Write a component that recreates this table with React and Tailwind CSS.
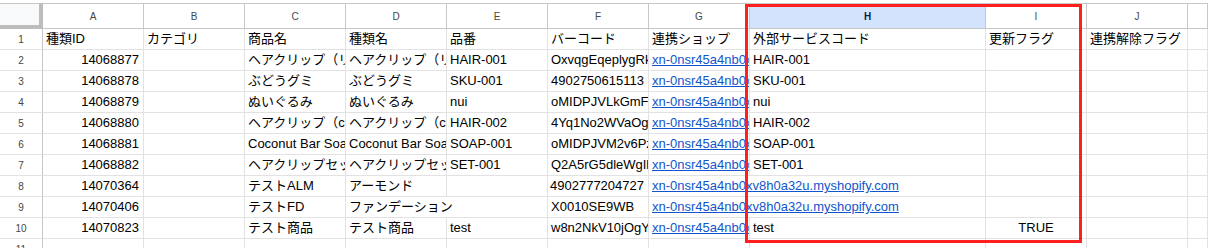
const LINK = 'xn-0nsr45a4nb0xv8h0a32u.myshopify.com';

const headers = ['A', 'B', 'C', 'D', 'E', 'F', 'G', 'H', 'I', 'J', ''];

const rows = [
  ['種類ID', 'カテゴリ', '商品名', '種類名', '品番', 'バーコード', '連携ショップ', '外部サービスコード', '更新フラグ', '連携解除フラグ', ''],
  [{ t: '14068877', right: true }, '', 'ヘアクリップ（リボン）', 'ヘアクリップ（リボン）', 'HAIR-001', 'OxvqgEqeplygRk2T', { t: LINK, link: true }, 'HAIR-001', '', '', ''],
  [{ t: '14068878', right: true }, '', 'ぶどうグミ', 'ぶどうグミ', 'SKU-001', { t: '4902750615113', right: true }, { t: LINK, link: true }, 'SKU-001', '', '', ''],
  [{ t: '14068879', right: true }, '', 'ぬいぐるみ', 'ぬいぐるみ', 'nui', 'oMIDPJVLkGmFq8x', { t: LINK, link: true }, 'nui', '', '', ''],
  [{ t: '14068880', right: true }, '', 'ヘアクリップ（cream）', 'ヘアクリップ（cream）', 'HAIR-002', '4Yq1No2WVaOgT5e', { t: LINK, link: true }, 'HAIR-002', '', '', ''],
  [{ t: '14068881', right: true }, '', 'Coconut Bar Soap', 'Coconut Bar Soap', 'SOAP-001', 'oMIDPJVM2v6Pz3c', { t: LINK, link: true }, 'SOAP-001', '', '', ''],
  [{ t: '14068882', right: true }, '', 'ヘアクリップセット', 'ヘアクリップセット', 'SET-001', 'Q2A5rG5dleWgIh7', { t: LINK, link: true }, 'SET-001', '', '', ''],
  [{ t: '14070364', right: true }, '', 'テストALM', 'アーモンド', '', { t: '4902777204727', right: true }, { t: LINK, link: true, span: true }, '', '', ''],
  [{ t: '14070406', right: true }, '', 'テストFD', { t: 'ファンデーション', span: true }, 'X0010SE9WB', { t: LINK, link: true, span: true }, '', '', ''],
  [{ t: '14070823', right: true }, '', 'テスト商品', 'テスト商品', 'test', 'w8n2NkV10jOgYb4', { t: LINK, link: true }, 'test', { t: 'TRUE', center: true }, '', ''],
  ['', '', '', '', '', '', '', '', '', '', ''],
];

function Cell({ c }) {
  const cell = typeof c === 'string' ? { t: c } : c;
  return (
    <div
      className={`h-[21px] overflow-hidden whitespace-nowrap border-r border-b border-[#e2e2e2] text-[13px] leading-[20px] text-black ${
        cell.span ? 'col-span-2' : ''
      } ${cell.right ? 'text-right pr-[4px]' : cell.center ? 'text-center' : 'pl-[3px]'}`}
    >
      {cell.link ? <span className="text-[#1155cc] underline">{cell.t}</span> : cell.t}
    </div>
  );
}

export default function App() {
  return (
    <div className="relative w-[1208px] h-[248px] overflow-hidden bg-white pt-[3px] font-['Liberation_Sans','Noto_Sans_CJK_JP',sans-serif]">
      <div className="grid grid-cols-[43px_101px_101px_101px_101px_101px_101px_101px_236px_101px_101px_1fr]">
        <div className="h-[26px] border-t border-t-[#c7c7c7] border-r-4 border-b-4 border-r-[#bdbdbd] border-b-[#bdbdbd] bg-[#f8f9fa]" />
        {headers.map((h, i) => (
          <div
            key={i}
            className={`h-[26px] flex items-center justify-center border-t border-r border-b border-[#c7c7c7] text-[10px] ${
              h === 'H' ? 'bg-[#d3e3fd] font-bold text-[#041e49]' : 'bg-white text-[#444746]'
            }`}
          >
            {h}
          </div>
        ))}
        {rows.map((r, ri) => (
          <div key={ri} className="contents">
            <div className="h-[21px] flex items-center justify-center border-r border-r-[#c7c7c7] border-b border-b-[#e2e2e2] text-[10px] text-[#444746]">
              {ri + 1}
            </div>
            {r.map((c, ci) => (
              <Cell key={ci} c={c} />
            ))}
          </div>
        ))}
      </div>
      <div className="absolute left-[745px] top-[4px] w-[337px] h-[239px] border-[3px] border-[#ff1f1f]" />
    </div>
  );
}
